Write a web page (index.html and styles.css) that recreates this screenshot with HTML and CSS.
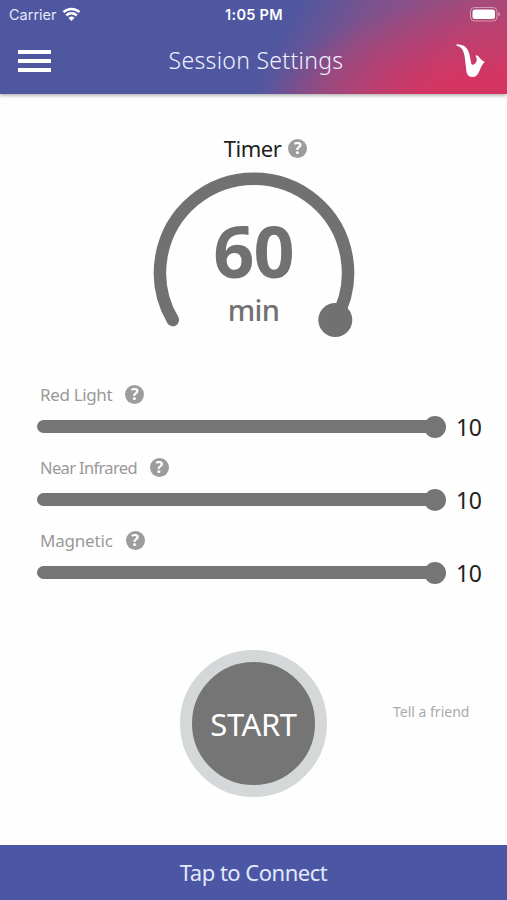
FILE: index.html
```html
<!DOCTYPE html>
<html lang="en">
<head>
    <meta charset="UTF-8">
    <title>Session Settings</title>
    <link rel="stylesheet" href="styles.css">
</head>
<body>
    <div class="header">
        <div class="status">
            <div class="carrier">
                <span>Carrier</span>
                <svg width="19" height="14" viewBox="0 0 18 14" fill="none" stroke="#fff" stroke-width="2.5">
                    <path d="M1 5.2a11.4 11.4 0 0 1 16 0"/>
                    <path d="M3.8 8.5a7.4 7.4 0 0 1 10.4 0"/>
                    <path d="M6 11a4.300 4.300 0 0 1 6 0L9 14z" fill="#fff" stroke="none"/>
                </svg>
            </div>
            <div class="clock">1:05 PM</div>
            <svg class="battery" width="31" height="15" viewBox="0 0 31 15">
                <rect x="0.5" y="0.5" width="26.5" height="13.5" rx="4" fill="none" stroke="#fff" stroke-opacity="0.45"/>
                <rect x="2.5" y="2.5" width="22.5" height="9.5" rx="2.5" fill="#fff"/>
                <path d="M28.3 5v4.5q1.7-.6 1.7-2.25T28.3 5z" fill="#fff" fill-opacity="0.5"/>
            </svg>
        </div>
        <div class="navbar">
            <div class="menu"><span></span><span></span><span></span></div>
            <h1>Session Settings</h1>
            <svg class="sax" width="30" height="34" viewBox="0 0 30 34" fill="#fff">
                <path d="M1 .2C4 .2 7.500 1 9.700 3.200C12.300 5.800 13.200 9 14 13L15 18.500C15.500 20.600 16.600 21.300 17.700 20.600C19.500 19.500 21 17.300 20.800 15.200C20.700 13.800 19.500 12.800 19.700 11.300C21.200 11.100 22.600 12.600 23.800 14C25.300 15.800 26.900 17.100 28.800 18C27.300 19.500 26 20.900 25 23.200L22.800 28.300C21.300 31.600 19.300 33 16.700 33C13.200 33 11.200 31.200 10.500 28L9 15.500C8.500 10.800 7.600 6.400 5.300 4.200C4.100 2.900 2.800 2.300 1.100 1.900C.2 1.600.2.300 1 .2z"/>
            </svg>
        </div>
    </div>

    <div class="timer">
        <h2><span>Timer</span> <span class="help">?</span></h2>
        <div class="dial">
            <svg width="202" height="166" viewBox="153 172 202 166">
                <path d="M172.800 320A94 94 0 1 1 335.200 320" fill="none" stroke="#717171" stroke-width="12.500" stroke-linecap="round"/>
                <circle cx="335.300" cy="320" r="17" fill="#717171"/>
            </svg>
            <div class="value">
                <strong>60</strong>
                <span>min</span>
            </div>
        </div>
    </div>

    <div class="sliders">
        <div class="setting">
            <div class="name"><span class="red">Red Light</span><span class="help">?</span></div>
            <div class="slider"><div class="track"></div><span class="level">10</span></div>
        </div>
        <div class="setting">
            <div class="name"><span class="infrared">Near Infrared</span><span class="help">?</span></div>
            <div class="slider"><div class="track"></div><span class="level">10</span></div>
        </div>
        <div class="setting">
            <div class="name"><span class="magnetic">Magnetic</span><span class="help">?</span></div>
            <div class="slider"><div class="track"></div><span class="level">10</span></div>
        </div>
    </div>

    <div class="actions">
        <button class="start"><span>START</span></button>
        <a class="tell">Tell a friend</a>
    </div>

    <div class="connect"><span>Tap to Connect</span></div>
</body>
</html>
```

FILE: styles.css
```css
* {
    box-sizing: border-box;
}

body {
    display: flex;
    flex-direction: column;
    width: 507px;
    height: 900px;
    margin: 0;
    overflow: hidden;
    background-color: #fefefe;
    color: #222;
    font-family: "Noto Sans", sans-serif;
}

h1, h2 {
    margin: 0;
    font-weight: normal;
}

svg {
    display: block;
}

.header {
    flex: none;
    height: 94px;
    background:
        radial-gradient(ellipse 210px 105px at 480px 105px, #d53563 25%, rgba(213, 53, 99, 0) 100%),
        linear-gradient(120deg, #4e57a0 53%, #7d528d 67%, #a54a7b 86%, #b5456f 100%);
    box-shadow: 0 1px 4px rgba(0, 0, 0, 0.4);
    color: #fff;
}

.status {
    display: grid;
    grid-template-columns: 1fr auto 1fr;
    align-items: center;
    height: 28px;
    padding: 0 6px 0 9px;
    font: 14.5px Inter, sans-serif;
}

.carrier {
    display: flex;
    gap: 5px;
    color: #e5e7f8;
}

.carrier svg {
    margin-top: 1px;
}

.clock {
    margin-right: 2px;
    font-weight: 600;
    letter-spacing: 0.3px;
}

.battery {
    justify-self: end;
}

.navbar {
    display: grid;
    grid-template-columns: 1fr auto 1fr;
    align-items: center;
    height: 66px;
    padding: 0 21px 0 18px;
}

.menu {
    display: flex;
    flex-direction: column;
    gap: 5px;
    width: 33px;
}

.menu span {
    height: 4px;
    background-color: #fff;
}

.navbar h1 {
    margin: -2px -4px 0 4px;
    color: #f0f1ff;
    font-size: 23px;
    font-weight: 350;
    letter-spacing: 0.3px;
    line-height: 30px;
}

.sax {
    justify-self: end;
}

.help {
    display: inline-flex;
    align-items: center;
    justify-content: center;
    width: 19px;
    height: 19px;
    border-radius: 50%;
    background-color: #9c9c9c;
    color: #fff;
    font-size: 16px;
    font-weight: 700;
    letter-spacing: 0;
    line-height: 19px;
}

.timer {
    display: flex;
    flex-direction: column;
    align-items: center;
    padding-top: 39px;
}

.timer h2 {
    display: flex;
    align-items: center;
    gap: 7px;
    height: 30px;
    margin-left: 24px;
    font-size: 22px;
    letter-spacing: -0.5px;
}

.dial {
    display: grid;
    margin-top: 9px;
    color: #717171;
}

.dial > * {
    grid-area: 1 / 1;
}

.value {
    display: flex;
    flex-direction: column;
    align-items: center;
    padding-top: 39px;
}

.value strong {
    height: 78px;
    font-size: 72px;
    letter-spacing: -1px;
    line-height: 78px;
}

.value span {
    font-size: 29px;
    font-weight: 500;
    letter-spacing: -0.7px;
    line-height: 41px;
}

.sliders {
    padding: 44px 0 0 37px;
}

.setting {
    height: 73px;
}

.name {
    display: flex;
    align-items: center;
    gap: 13px;
    height: 24px;
    padding-left: 3px;
    color: #999;
    font-size: 17px;
}

.red {
    letter-spacing: -0.35px;
}

.infrared {
    font-size: 16.5px;
    letter-spacing: -0.65px;
}

.magnetic {
    letter-spacing: -0.2px;
}

.slider {
    display: flex;
    align-items: center;
    gap: 20px;
    height: 41px;
}

.track {
    position: relative;
    width: 399px;
    height: 13px;
    border-radius: 7px;
    background-color: #757575;
}

.track::after {
    content: "";
    position: absolute;
    top: -4.5px;
    right: -10px;
    width: 22px;
    height: 22px;
    border-radius: 50%;
    background-color: #757575;
}

.level {
    font-size: 23px;
    letter-spacing: -0.5px;
}

.actions {
    display: grid;
    grid-template-columns: 1fr auto 1fr;
    margin-top: 49px;
}

.start {
    grid-column: 2;
    width: 147px;
    height: 147px;
    padding: 0;
    border: 12px solid #d4d8d8;
    border-radius: 50%;
    background-color: #757575;
    color: #fff;
    font: 450 31px "Noto Sans", sans-serif;
    letter-spacing: -0.4px;
}

.tell {
    margin: 51px 0 0 66px;
    color: #aaa;
    font-size: 14px;
    line-height: 22px;
}

.connect {
    display: flex;
    align-items: center;
    justify-content: center;
    height: 55px;
    margin-top: auto;
    padding-bottom: 2px;
    background-color: #4b57a5;
    color: #e3e8fc;
    font-size: 22px;
    letter-spacing: -0.5px;
}
```
